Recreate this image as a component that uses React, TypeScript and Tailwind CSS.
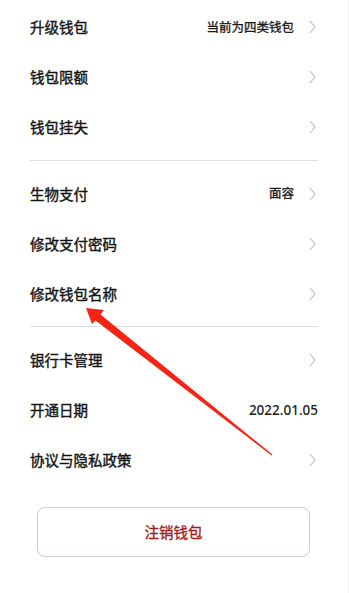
const sections = [
  [
    { label: "升级钱包", value: "当前为四类钱包", arrow: true },
    { label: "钱包限额", arrow: true },
    { label: "钱包挂失", arrow: true },
  ],
  [
    { label: "生物支付", value: "面容", arrow: true },
    { label: "修改支付密码", arrow: true },
    { label: "修改钱包名称", arrow: true },
  ],
  [
    { label: "银行卡管理", arrow: true },
    { label: "开通日期", date: "2022.01.05", arrow: false },
    { label: "协议与隐私政策", arrow: true },
  ],
];

function Chevron() {
  return (
    <svg width="7" height="14" viewBox="0 0 7 14" className="ml-[15px] shrink-0">
      <path d="M1 1 L6 7 L1 13" fill="none" stroke="#bcbcbc" strokeWidth="1.1" />
    </svg>
  );
}

type Row = { label: string; value?: string; date?: string; arrow: boolean };

function SettingRow({ row }: { row: Row }) {
  return (
    <div className="h-[50px] flex items-center justify-between">
      <span className="text-[14.5px] text-[#141414] [-webkit-text-stroke:0.4px_#141414]">{row.label}</span>
      <div className="flex items-center pr-[2px]">
        {row.value && (
          <span className="text-[12.5px] text-[#1a1a1a] [-webkit-text-stroke:0.35px_#1a1a1a]">{row.value}</span>
        )}
        {row.date && (
          <span className="text-[13.5px] font-medium text-[#1a1a1a] -mr-[2px] font-['Noto_Sans',sans-serif]">
            {row.date}
          </span>
        )}
        {row.arrow && <Chevron />}
      </div>
    </div>
  );
}

export default function App() {
  return (
    <div className="relative w-[349px] h-[593px] overflow-hidden bg-white font-['Noto_Sans_CJK_SC','Noto_Sans',sans-serif] border-r border-[#f2f2f2]">
      <div className="mx-[30px] border-t border-[#f0f0f0] -mt-[7px]">
        {sections.map((rows, i) => (
          <div key={i} className={`pt-[8px] pb-[7.5px] ${i < sections.length - 1 ? "border-b border-[#dedede]" : ""}`}>
            {rows.map((r) => (
              <SettingRow key={r.label} row={r} />
            ))}
          </div>
        ))}
      </div>

      <div className="mt-[14.5px] mx-[37px] w-[273px] h-[50px] rounded-[8px] border border-[#dbc9c9] flex items-center justify-center">
        <span className="text-[14.5px] text-[#9c1f1c] [-webkit-text-stroke:0.35px_#9c1f1c]">注销钱包</span>
      </div>

      {/* red annotation arrow */}
      <svg className="absolute left-0 top-0 pointer-events-none" width="349" height="593" viewBox="0 0 349 593">
        <polygon points="86,308 104,310 100.5,314.4 272.4,454.5 271.6,455.5 95.5,320.6 92,324" fill="#f52416" />
      </svg>
    </div>
  );
}
